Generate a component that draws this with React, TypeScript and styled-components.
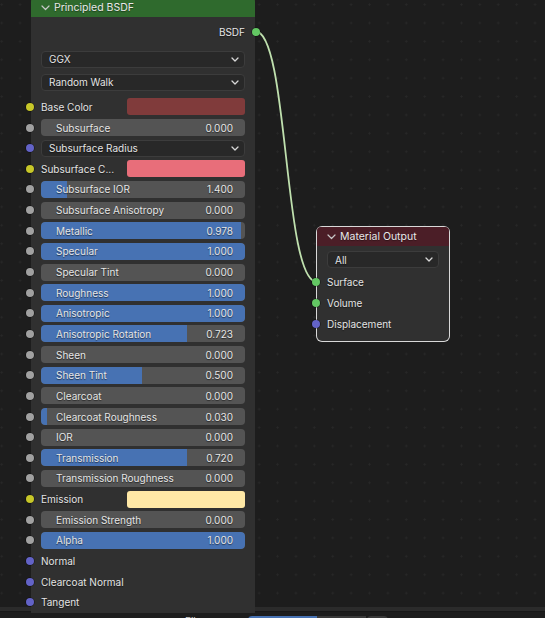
import React from 'react'
import styled, { createGlobalStyle } from 'styled-components'

const GlobalStyle = createGlobalStyle`
	html, body {
		margin: 0;
		padding: 0;
		background: #1d1d1d;
		overflow: hidden;
	}
	body {
		font-family: Inter, 'DejaVu Sans', sans-serif;
		font-size: 10px;
		color: #e6e6e6;
	}
`

const SOCKET = {
	color: '#c7c729',
	float: '#a1a1a1',
	vector: '#6363c7',
	shader: '#63c763'
}

type Row =
	| { kind: 'slider'; label: string; value: string; fill: number; socket: string }
	| { kind: 'color'; label: string; swatch: string; socket: string }
	| { kind: 'select'; label: string; socket: string }
	| { kind: 'plain'; label: string; socket: string }

const ROWS: Row[] = [
	{ kind: 'color', label: 'Base Color', swatch: '#803b3b', socket: SOCKET.color },
	{ kind: 'slider', label: 'Subsurface', value: '0.000', fill: 0, socket: SOCKET.float },
	{ kind: 'select', label: 'Subsurface Radius', socket: SOCKET.vector },
	{ kind: 'color', label: 'Subsurface C...', swatch: '#e86e7a', socket: SOCKET.color },
	{ kind: 'slider', label: 'Subsurface IOR', value: '1.400', fill: 0.127, socket: SOCKET.float },
	{ kind: 'slider', label: 'Subsurface Anisotropy', value: '0.000', fill: 0, socket: SOCKET.float },
	{ kind: 'slider', label: 'Metallic', value: '0.978', fill: 0.978, socket: SOCKET.float },
	{ kind: 'slider', label: 'Specular', value: '1.000', fill: 1, socket: SOCKET.float },
	{ kind: 'slider', label: 'Specular Tint', value: '0.000', fill: 0, socket: SOCKET.float },
	{ kind: 'slider', label: 'Roughness', value: '1.000', fill: 1, socket: SOCKET.float },
	{ kind: 'slider', label: 'Anisotropic', value: '1.000', fill: 1, socket: SOCKET.float },
	{ kind: 'slider', label: 'Anisotropic Rotation', value: '0.723', fill: 0.716, socket: SOCKET.float },
	{ kind: 'slider', label: 'Sheen', value: '0.000', fill: 0, socket: SOCKET.float },
	{ kind: 'slider', label: 'Sheen Tint', value: '0.500', fill: 0.495, socket: SOCKET.float },
	{ kind: 'slider', label: 'Clearcoat', value: '0.000', fill: 0, socket: SOCKET.float },
	{ kind: 'slider', label: 'Clearcoat Roughness', value: '0.030', fill: 0.03, socket: SOCKET.float },
	{ kind: 'slider', label: 'IOR', value: '0.000', fill: 0, socket: SOCKET.float },
	{ kind: 'slider', label: 'Transmission', value: '0.720', fill: 0.716, socket: SOCKET.float },
	{ kind: 'slider', label: 'Transmission Roughness', value: '0.000', fill: 0, socket: SOCKET.float },
	{ kind: 'color', label: 'Emission', swatch: '#ffe8a6', socket: SOCKET.color },
	{ kind: 'slider', label: 'Emission Strength', value: '0.000', fill: 0, socket: SOCKET.float },
	{ kind: 'slider', label: 'Alpha', value: '1.000', fill: 1, socket: SOCKET.float },
	{ kind: 'plain', label: 'Normal', socket: SOCKET.vector },
	{ kind: 'plain', label: 'Clearcoat Normal', socket: SOCKET.vector },
	{ kind: 'plain', label: 'Tangent', socket: SOCKET.vector }
]

const Chevron = (): JSX.Element => (
	<svg width="8" height="5" viewBox="0 0 8 5">
		<path d="M1 1 L4 4 L7 1" fill="none" stroke="#d8d8d8" strokeWidth="1.3" strokeLinecap="round" strokeLinejoin="round" />
	</svg>
)

const HeaderChevron = (): JSX.Element => (
	<svg width="9" height="6" viewBox="0 0 9 6">
		<path d="M1 1 L4.5 4.5 L8 1" fill="none" stroke="#c8c8c8" strokeWidth="1.2" strokeLinecap="round" strokeLinejoin="round" />
	</svg>
)

const renderRow = (row: Row): JSX.Element => {
	switch (row.kind) {
		case 'slider':
			return (
				<Slider>
					<SliderFill style={{ width: `${row.fill * 100}%` }} $full={row.fill >= 1} />
					<SliderLabel>{row.label}</SliderLabel>
					<SliderValue>{row.value}</SliderValue>
				</Slider>
			)
		case 'color':
			return (
				<>
					<SocketLabel>{row.label}</SocketLabel>
					<Swatch $color={row.swatch} />
				</>
			)
		case 'select':
			return (
				<Select>
					<span>{row.label}</span>
					<Chevron />
				</Select>
			)
		default:
			return <SocketLabel>{row.label}</SocketLabel>
	}
}

export default function App(): JSX.Element {
	return (
		<>
			<GlobalStyle />
			<Page>
				<Canvas>
					<Link width="545" height="607">
						<path d="M255 31 C 289 31, 283 282, 317 282" fill="none" stroke="#bfe0ae" strokeWidth="1.8" />
					</Link>

					<Node $left={31} $top={-2} $width={224}>
						<NodeHeader $bg="#2f6a2d">
							<HeaderChevron />
							<span>Principled BSDF</span>
						</NodeHeader>
						<NodeBody $pad="5px 10px 12px">
							<OutputRow>
								<span>BSDF</span>
								<Socket $color={SOCKET.shader} $side="right" />
							</OutputRow>
							<SelectStack>
								<Select>
									<span>GGX</span>
									<Chevron />
								</Select>
								<Select>
									<span>Random Walk</span>
									<Chevron />
								</Select>
							</SelectStack>
							<InputList>
								{ROWS.map((row) => (
									<InputRow key={row.label}>
										<Socket $color={row.socket} $side="left" />
										{renderRow(row)}
									</InputRow>
								))}
							</InputList>
						</NodeBody>
					</Node>

					<Node $left={317} $top={227} $width={132} $selected>
						<NodeHeader $bg="#4b1e27">
							<HeaderChevron />
							<span>Material Output</span>
						</NodeHeader>
						<NodeBody $pad="5px 10px 7px">
							<Select>
								<span>All</span>
								<Chevron />
							</Select>
							<OutList>
								<InputRow>
									<Socket $color={SOCKET.shader} $side="left" />
									<SocketLabel>Surface</SocketLabel>
								</InputRow>
								<InputRow>
									<Socket $color={SOCKET.shader} $side="left" />
									<SocketLabel>Volume</SocketLabel>
								</InputRow>
								<InputRow>
									<Socket $color={SOCKET.vector} $side="left" />
									<SocketLabel>Displacement</SocketLabel>
								</InputRow>
							</OutList>
						</NodeBody>
					</Node>
				</Canvas>
				<Divider />
				<Footer>
					<FooterText>File</FooterText>
					<FooterButton $bg="#4772b3" $width={69} />
					<FooterButton $bg="#3a3a3a" $width={49} />
					<FooterButton $bg="#3a3a3a" $width={21} $gap />
				</Footer>
			</Page>
		</>
	)
}

const Page = styled.div`
	display: flex;
	flex-direction: column;
	width: 545px;
	height: 618px;
	overflow: hidden;
`

const Canvas = styled.div`
	position: relative;
	z-index: 1;
	height: 607px;
	flex: none;
	background-color: #1d1d1d;
	background-image: radial-gradient(circle, #282828 0.9px, transparent 1.2px);
	background-size: 18.4px 18.4px;
	background-position: -7.5px -4.6px;
`

const Link = styled.svg`
	position: absolute;
	left: 0;
	top: 0;
	pointer-events: none;
`

const Node = styled.div<{ $left: number; $top: number; $width: number; $selected?: boolean }>`
	position: absolute;
	left: ${(p) => p.$left}px;
	top: ${(p) => p.$top}px;
	width: ${(p) => p.$width}px;
	background: #303030;
	border-radius: 5px;
	box-shadow: ${(p) => (p.$selected ? '0 0 0 1px #d9d9d9' : 'none')};
	${(p) => (p.$selected ? '' : 'border-radius: 0; height: 615px;')}
`

const NodeHeader = styled.div<{ $bg: string }>`
	display: flex;
	align-items: center;
	gap: 4px;
	height: 19px;
	padding: 0 0 0 10px;
	background: ${(p) => p.$bg};
	border-radius: 4px 4px 0 0;
	color: #e8e8e8;
	font-size: 10.5px;
	text-shadow: 0 1px 1px rgba(0, 0, 0, 0.4);
	svg {
		margin-top: 1px;
	}
`

const NodeBody = styled.div<{ $pad: string }>`
	display: flex;
	flex-direction: column;
	padding: ${(p) => p.$pad};
`

const OutputRow = styled.div`
	position: relative;
	display: flex;
	align-items: center;
	justify-content: flex-end;
	height: 20.6px;
	text-shadow: 0 1px 1px rgba(0, 0, 0, 0.5);
`

const SelectStack = styled.div`
	display: flex;
	flex-direction: column;
	gap: 6px;
	margin: 8px 0 6px;
`

const Select = styled.div`
	box-sizing: border-box;
	display: flex;
	align-items: center;
	justify-content: space-between;
	width: 100%;
	height: 17px;
	padding: 0 5px 0 7px;
	background: #282828;
	border: 1px solid #3c3c3c;
	border-radius: 4px;
	color: #e4e4e4;
	text-shadow: 0 1px 1px rgba(0, 0, 0, 0.5);
`

const InputList = styled.div`
	display: flex;
	flex-direction: column;
`

const OutList = styled.div`
	display: flex;
	flex-direction: column;
	margin-top: 4px;
`

const InputRow = styled.div`
	position: relative;
	display: flex;
	align-items: center;
	height: 20.65px;
`

const Socket = styled.span<{ $color: string; $side: 'left' | 'right' }>`
	position: absolute;
	top: 50%;
	${(p) => (p.$side === 'left' ? 'left: -15px;' : 'right: -15px;')}
	width: 8px;
	height: 8px;
	margin-top: -4px;
	border-radius: 50%;
	background: ${(p) => p.$color};
	box-shadow: 0 0 0 0.6px rgba(0, 0, 0, 0.55);
`

const SocketLabel = styled.span`
	flex: 1;
	white-space: nowrap;
	color: #e4e4e4;
	text-shadow: 0 1px 1px rgba(0, 0, 0, 0.5);
`

const Swatch = styled.span<{ $color: string }>`
	width: 118px;
	height: 17px;
	border-radius: 3px;
	background: ${(p) => p.$color};
`

const Slider = styled.div`
	position: relative;
	display: flex;
	align-items: center;
	justify-content: space-between;
	width: 100%;
	height: 17px;
	padding: 0 12px 0 15px;
	box-sizing: border-box;
	background: #545454;
	border-radius: 4px;
	overflow: hidden;
	color: #e6e6e6;
	text-shadow: 0 1px 1px rgba(0, 0, 0, 0.55);
`

const SliderFill = styled.span<{ $full: boolean }>`
	position: absolute;
	left: 0;
	top: 0;
	bottom: 0;
	background: #4772b3;
	border-radius: ${(p) => (p.$full ? '4px' : '4px 0 0 4px')};
`

const SliderLabel = styled.span`
	position: relative;
	white-space: nowrap;
`

const SliderValue = styled.span`
	position: relative;
`

const Divider = styled.div`
	flex: none;
	height: 4px;
	background: #2b2b2b;
`

const Footer = styled.div`
	flex: 1;
	display: flex;
	align-items: flex-start;
	padding: 4px 0 0 185px;
	background: #1d1d1d;
	border-top: 1px solid #181818;
`

const FooterText = styled.span`
	width: 63px;
	margin-top: -1px;
	color: #cfcfcf;
`

const FooterButton = styled.span<{ $bg: string; $width: number; $gap?: boolean }>`
	width: ${(p) => p.$width}px;
	height: 18px;
	margin-left: ${(p) => (p.$gap ? '1px' : '0')};
	background: ${(p) => p.$bg};
	border-radius: ${(p) => (p.$gap ? '4px' : '0')};
	&:nth-of-type(2) {
		border-radius: 4px 0 0 4px;
	}
`
